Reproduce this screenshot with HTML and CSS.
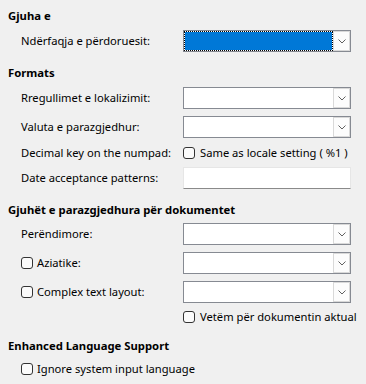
FILE: index.html
```html
<!DOCTYPE html>
<html lang="sq">
<head>
<meta charset="utf-8">
<title>Gjuha e</title>
<link rel="stylesheet" href="styles.css">
</head>
<body>
<div class="page">
  <section class="group">
    <h2 class="heading">Gjuha e</h2>
    <div class="row">
      <span class="lbl">Ndërfaqja e përdoruesit:</span>
      <div class="combo focused">
        <div class="field"></div>
        <div class="btn"><svg width="8" height="5" viewBox="0 0 8 5"><polyline points="0.5,0.5 4,4 7.5,0.5" fill="none" stroke="#606060" stroke-width="1"/></svg></div>
      </div>
    </div>
  </section>

  <section class="group">
    <h2 class="heading">Formats</h2>
    <div class="row">
      <span class="lbl">Rregullimet e lokalizimit:</span>
      <div class="combo">
        <div class="field"></div>
        <div class="btn"><svg width="8" height="5" viewBox="0 0 8 5"><polyline points="0.5,0.5 4,4 7.5,0.5" fill="none" stroke="#606060" stroke-width="1"/></svg></div>
      </div>
    </div>
    <div class="row">
      <span class="lbl">Valuta e parazgjedhur:</span>
      <div class="combo">
        <div class="field"></div>
        <div class="btn"><svg width="8" height="5" viewBox="0 0 8 5"><polyline points="0.5,0.5 4,4 7.5,0.5" fill="none" stroke="#606060" stroke-width="1"/></svg></div>
      </div>
    </div>
    <div class="row row-check">
      <span class="lbl">Decimal key on the numpad:</span>
      <label class="check"><span class="box"></span><span>Same as locale setting ( %1 )</span></label>
    </div>
    <div class="row row-date">
      <span class="lbl">Date acceptance patterns:</span>
      <div class="entry"></div>
    </div>
  </section>

  <section class="group">
    <h2 class="heading">Gjuhët e parazgjedhura për dokumentet</h2>
    <div class="row first">
      <span class="lbl">Perëndimore:</span>
      <div class="combo">
        <div class="field"></div>
        <div class="btn"><svg width="8" height="5" viewBox="0 0 8 5"><polyline points="0.5,0.5 4,4 7.5,0.5" fill="none" stroke="#606060" stroke-width="1"/></svg></div>
      </div>
    </div>
    <div class="row">
      <label class="check lbl-check"><span class="box"></span><span>Aziatike:</span></label>
      <div class="combo">
        <div class="field"></div>
        <div class="btn"><svg width="8" height="5" viewBox="0 0 8 5"><polyline points="0.5,0.5 4,4 7.5,0.5" fill="none" stroke="#606060" stroke-width="1"/></svg></div>
      </div>
    </div>
    <div class="row">
      <label class="check lbl-check"><span class="box"></span><span>Complex text layout:</span></label>
      <div class="combo">
        <div class="field"></div>
        <div class="btn"><svg width="8" height="5" viewBox="0 0 8 5"><polyline points="0.5,0.5 4,4 7.5,0.5" fill="none" stroke="#606060" stroke-width="1"/></svg></div>
      </div>
    </div>
    <div class="row row-check row-after">
      <span class="lbl"></span>
      <label class="check"><span class="box"></span><span>Vetëm për dokumentin aktual</span></label>
    </div>
  </section>

  <section class="group">
    <h2 class="heading">Enhanced Language Support</h2>
    <div class="row row-check row-single">
      <label class="check lbl-check"><span class="box"></span><span>Ignore system input language</span></label>
    </div>
  </section>
</div>
</body>
</html>
```

FILE: styles.css
```css
html, body {
  margin: 0;
  padding: 0;
  background: #f0f0f0;
}

body {
  font-family: "Noto Sans", "Open Sans", sans-serif;
  font-size: 11.2px;
  color: #000;
}

.page {
  width: 366px;
  height: 384px;
  padding: 8px 8px 0 8px;
  box-sizing: border-box;
  overflow: hidden;
}

.group + .group {
  margin-top: 13px;
}

.heading {
  margin: 0;
  font-size: 11.3px;
  font-weight: 700;
  line-height: 16px;
  height: 16px;
}

.row {
  display: grid;
  grid-template-columns: 162px 168px;
  align-items: center;
  padding-left: 13px;
  height: 22px;
  margin-top: 7px;
}

.heading + .row {
  margin-top: 6px;
}

.heading + .row.first {
  margin-top: 5px;
}

.row-check {
  height: 16px;
}

.row-after {
  margin-top: 6px;
}

.heading + .row-single {
  margin-top: 7px;
  grid-template-columns: 1fr;
}

.row-date {
  margin-top: 6px;
}

.lbl {
  white-space: nowrap;
  line-height: 16px;
}

.combo {
  display: flex;
  height: 22px;
  box-sizing: border-box;
  border: 1px solid #868a92;
  background: #fff;
}

.field {
  flex: 1;
}

.combo.focused .field {
  border: 1px dotted #000;
  background: #0078d7;
  background-clip: padding-box;
}

.btn {
  width: 17px;
  box-sizing: border-box;
  border: 1px solid #d9d9d9;
  background: #fcfcfc;
  display: flex;
  align-items: center;
  justify-content: center;
}

.btn svg {
  display: block;
  margin-top: 1px;
}

.check {
  display: flex;
  align-items: center;
  gap: 5px;
  white-space: nowrap;
  line-height: 16px;
}

.lbl-check {
  gap: 4px;
}

.box {
  width: 12px;
  height: 12px;
  box-sizing: border-box;
  border: 1px solid #333;
  border-radius: 3px;
  background: #fbfbfb;
  flex: none;
}

.entry {
  height: 22px;
  box-sizing: border-box;
  background: #fff;
  border: 1px solid #e6e6e6;
  border-bottom: 1px solid #8a8a8a;
}
```
